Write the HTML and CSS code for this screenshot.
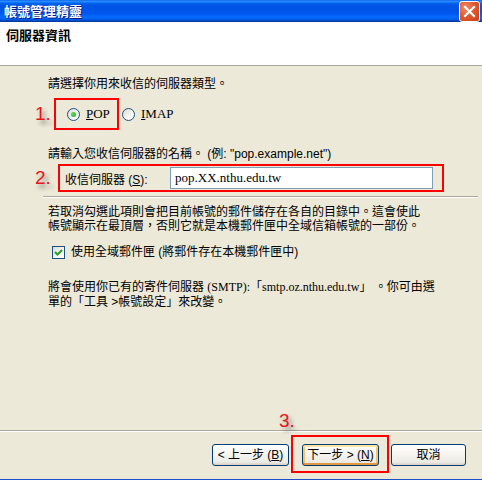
FILE: index.html
```html
<!DOCTYPE html>
<html lang="zh-Hant">
<head>
<meta charset="utf-8">
<title>帳號管理精靈</title>
<link rel="stylesheet" href="styles.css">
</head>
<body>
<div class="window">
  <div class="titlebar">
    <span class="title">帳號管理精靈</span>
    <span class="close">
      <svg width="21" height="21" viewBox="0 0 21 21"><path d="M6 6 L15 15 M15 6 L6 15" stroke="#fff" stroke-width="2.2" stroke-linecap="square"/></svg>
    </span>
  </div>
  <div class="header">伺服器資訊</div>
  <div class="wizard-body">
    <p class="prompt">請選擇你用來收信的伺服器類型。</p>
    <div class="step-row step-row-1">
      <span class="step-num">1.</span>
      <div class="redbox redbox-1">
        <span class="radio checked"><span class="dot"></span></span>
        <span class="latin"><u>P</u>OP</span>
      </div>
      <span class="radio radio-imap"></span>
      <span class="latin"><u>I</u>MAP</span>
    </div>
    <p class="prompt prompt-2">請輸入您收信伺服器的名稱。 (例: "pop.example.net")</p>
    <div class="step-row step-row-2">
      <span class="step-num num-2">2.</span>
      <div class="redbox redbox-2">
        <span class="field-label">收信伺服器 (<u>S</u>):</span>
        <div class="textbox">pop.XX.nthu.edu.tw</div>
      </div>
    </div>
    <div class="separator"></div>
    <p class="para">若取消勾選此項則會把目前帳號的郵件儲存在各自的目錄中。這會使此<br>帳號顯示在最頂層，否則它就是本機郵件匣中全域信箱帳號的一部份。</p>
    <div class="check-row">
      <span class="checkbox"><svg width="11" height="11" viewBox="0 0 11 11"><path d="M2 5 L4.5 7.5 L9 3" stroke="#21a121" stroke-width="2" fill="none"/></svg></span>
      <span>使用全域郵件匣 (將郵件存在本機郵件匣中)</span>
    </div>
    <p class="para para-2">將會使用你已有的寄件伺服器 <span class="latin">(SMTP):</span>「<span class="latin">smtp.oz.nthu.edu.tw</span>」 。你可由選<br>單的「工具 &gt;帳號設定」來改變。</p>
  </div>
  <div class="footer">
    <span class="step-num num-3">3.</span>
    <button class="btn btn-back">&lt; 上一步 (<u>B</u>)</button>
    <div class="redbox redbox-3">
      <button class="btn btn-default">下一步 &gt; (<u>N</u>)</button>
    </div>
    <button class="btn btn-cancel">取消</button>
  </div>
</div>
</body>
</html>
```
FILE: styles.css
```css
* { box-sizing: border-box; }
html, body { margin: 0; padding: 0; }
body {
  background: #ece9d8;
  font-family: "Liberation Sans", "Noto Sans CJK TC", sans-serif;
  font-size: 12px;
  color: #000;
}
.window {
  width: 482px;
  height: 480px;
  display: flex;
  flex-direction: column;
  background: #ece9d8;
  overflow: hidden;
}
.titlebar {
  height: 22px;
  flex: none;
  display: flex;
  align-items: center;
  justify-content: space-between;
  padding-left: 4px;
  padding-right: 2px;
  background: linear-gradient(to bottom, #0058ee 0%, #3593ff 5%, #127dff 10%, #0262ee 16%, #0054e3 26%, #0055eb 56%, #005bf5 66%, #026afe 76%, #0062ef 86%, #0052d6 92%, #0040ab 96%, #003092 100%);
}
.title {
  color: #fff;
  font-weight: bold;
  font-size: 13px;
  line-height: 16px;
  text-shadow: 1px 1px 0 #0a1883;
  font-family: "Noto Sans CJK TC", sans-serif;
}
.close {
  width: 21px;
  height: 21px;
  border: 1px solid #fff;
  border-radius: 3px;
  background: radial-gradient(circle at 30% 30%, #f08d6b 0%, #e25a2f 45%, #c7401b 100%);
  display: flex;
  align-items: center;
  justify-content: center;
  margin-top: 1px;
}
.close svg { display: block; margin: -1px; }
.header {
  height: 44px;
  flex: none;
  background: #fff;
  border-bottom: 1px solid #aca899;
  padding: 5px 6px 0;
  font-weight: bold;
  font-size: 13px;
  line-height: 16px;
  font-family: "Noto Sans CJK TC", sans-serif;
}
.wizard-body {
  height: 364px;
  flex: none;
  display: flex;
  flex-direction: column;
  padding-left: 35px;
}
p { margin: 0; }
.prompt {
  margin: 10px 0 0 13px;
  line-height: 16px;
}
.prompt-2 { margin-top: 16px; }
.step-row {
  display: flex;
  align-items: center;
}
.step-row-1 { margin-top: 6px; }
.step-row-2 { margin-top: 2px; }
.step-num {
  color: #e8141b;
  font-family: "Liberation Sans", sans-serif;
  font-size: 19px;
  line-height: 20px;
  text-shadow: 3px 4px 4px rgba(0,0,0,0.4);
  width: 19px;
  flex: none;
}
.num-2 { width: 23px; }
.redbox {
  border: 2px solid #ff0000;
  display: flex;
  align-items: center;
}
.redbox-1 {
  width: 65px;
  height: 32px;
  padding-left: 11px;
}
.redbox-2 {
  width: 386px;
  height: 28px;
  padding-left: 5px;
}
.radio {
  width: 13px;
  height: 13px;
  border: 1px solid #1c5180;
  border-radius: 50%;
  background: linear-gradient(135deg, #dcdbd5 0%, #f6f6f3 60%, #ffffff 100%);
  display: inline-flex;
  align-items: center;
  justify-content: center;
  flex: none;
  margin-right: 6px;
}
.radio .dot {
  width: 5px;
  height: 5px;
  border-radius: 50%;
  background: radial-gradient(circle at 35% 35%, #5ee05e, #21a121);
}
.radio-imap { margin-left: 3px; }
.latin {
  font-family: "Liberation Serif", serif;
  font-size: 13px;
}
.field-label {
  width: 105px;
  flex: none;
}
.textbox {
  width: 263px;
  height: 22px;
  border: 1px solid #7f9db9;
  background: #fff;
  padding-left: 4px;
  font-family: "Liberation Serif", serif;
  font-size: 13px;
  line-height: 20px;
}
.separator {
  margin: 4px 4px 0 8px;
  height: 2px;
  border-top: 1px solid #aca899;
  border-bottom: 1px solid #fff;
}
.para {
  margin: 7px 0 0 13px;
  line-height: 14px;
}
.para-2 {
  margin-top: 21px;
  line-height: 15px;
}
.para-2 .latin { font-size: 12px; }
.check-row {
  margin: 12px 0 0 17px;
  display: flex;
  align-items: center;
  line-height: 14px;
}
.checkbox {
  width: 13px;
  height: 13px;
  border: 1px solid #1c5180;
  background: linear-gradient(135deg, #dcdcd7 0%, #f5f5f2 60%, #ffffff 100%);
  display: inline-flex;
  align-items: center;
  justify-content: center;
  margin-right: 6px;
  flex: none;
}
.checkbox svg { display: block; }
.footer {
  height: 50px;
  flex: none;
  position: relative;
  border-top: 1px solid #aca899;
  border-bottom: 1px solid #1d4fc8;
  box-shadow: inset 0 1px 0 #fff;
  display: flex;
  align-items: flex-start;
  justify-content: flex-end;
  gap: 2px;
  padding: 4px 16px 0 0;
}
.num-3 {
  position: absolute;
  left: 279px;
  top: -20px;
}
.btn {
  height: 22px;
  border: 1px solid #003c74;
  border-radius: 3px;
  background: linear-gradient(to bottom, #ffffff 0%, #f4f3ee 50%, #ecebe6 85%, #d6d0c5 100%);
  font-family: "Liberation Sans", "Noto Sans CJK TC", sans-serif;
  font-size: 12px;
  color: #000;
  padding: 0;
  line-height: 18px;
}
.btn-back { width: 77px; margin-top: 9px; }
.btn-cancel { width: 75px; margin-top: 9px; }
.redbox-3 {
  width: 98px;
  height: 38px;
  padding: 7px 0 0 9px;
  align-items: flex-start;
}
.btn-default {
  width: 77px;
  box-shadow: inset 0 2px 0 #ffe7a2, inset 0 -2px 0 #e5973d, inset 2px 0 0 #f8c45f, inset -2px 0 0 #f8c45f;
}
```
